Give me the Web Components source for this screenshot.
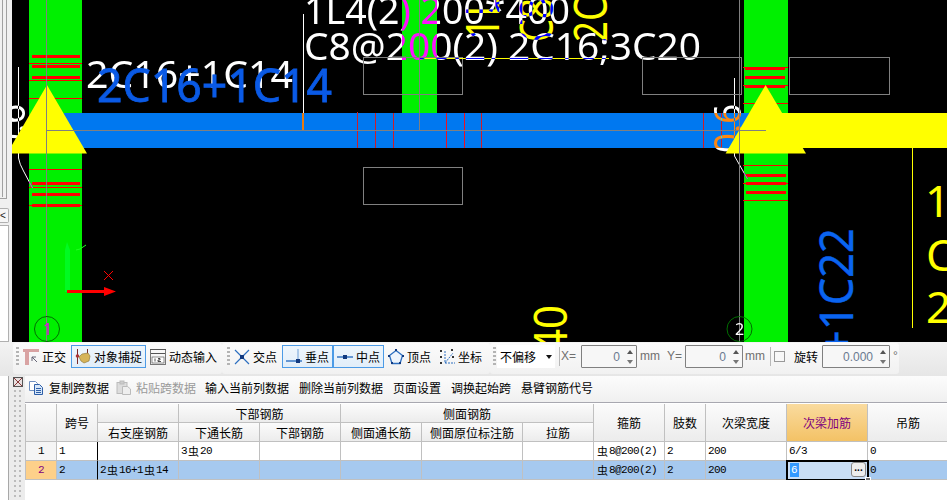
<!DOCTYPE html>
<html lang="zh">
<head>
<meta charset="utf-8">
<title>梁平法表格</title>
<style>
  html, body { margin: 0; height: 100%; background: #fff; overflow: hidden; }
  body { font: 12px "Noto Sans CJK SC", "Liberation Sans", sans-serif; color: #000; }
</style>
</head>
<body>
<cad-app></cad-app>

<script>
const CJK = `"Noto Sans CJK SC", "Liberation Sans", sans-serif`;

class LeftStrip extends HTMLElement {
  constructor() {
    super();
    this.attachShadow({ mode: "open" });
  }

  connectedCallback() {
    this.shadowRoot.innerHTML = /* html */`
    <style>
      :host { display: flex; flex-direction: column; width: 12px; height: 342px; background: #f0f0f0; }
      .tree { box-sizing: border-box; height: 199px; width: 7px; border-right: 1px solid #a0a0a0; border-bottom: 1px solid #a0a0a0; }
      .tree div { box-sizing: border-box; height: 197px; width: 3px; border-right: 1px solid #a0a0a0; }
      .tab {
        box-sizing: border-box; width: 9px; height: 15px; margin-top: 9px;
        border: 1px solid #b0b0b0; border-left: 0; border-radius: 0 2px 2px 0;
        background: #f6f6f6; font: 10px "Liberation Sans", sans-serif; line-height: 13px; color: #222;
      }
      .panel { box-sizing: border-box; width: 9px; flex: 1; margin-top: 2px; background: #fff; border: 1px solid #b0b0b0; border-left: 0; }
    </style>
    <div class="tree"><div></div></div>
    <div class="tab">&lt;</div>
    <div class="panel"></div>`;
  }
}

class CadCanvas extends HTMLElement {
  constructor() {
    super();
    this.attachShadow({ mode: "open" });
  }

  rungs(x1, x2, ys, w) {
    return ys.map(y => `<rect x="${x1}" y="${y}" width="${x2 - x1}" height="${w}"/>`).join("");
  }

  connectedCallback() {
    this.shadowRoot.innerHTML = /* html */`
    <style>
      :host { display: block; flex: 1; height: 342px; overflow: hidden; }
      svg { display: block; }
      text { font-family: "Noto Sans", "Liberation Sans", sans-serif; }
      .xor { mix-blend-mode: difference; }
    </style>
    <svg width="935" height="342" viewBox="12 0 935 342" shape-rendering="crispEdges">
      <rect x="12" y="0" width="935" height="342" fill="#000"/>

      <g fill="#00f000">
        <rect x="29" y="0" width="53" height="342"/>
        <rect x="402" y="0" width="35" height="113"/>
        <rect x="744" y="0" width="44" height="342"/>
      </g>
      <rect x="64" y="113" width="690" height="35" fill="#0078f0"/>
      <rect x="780" y="113" width="167" height="35" fill="#ffff00"/>

      <g fill="#ff0000">
        ${this.rungs(32, 80, [55, 65, 76, 182, 193, 204], 3)}
        ${this.rungs(29, 82, [63, 80, 98, 169, 187, 205], 1)}
        ${this.rungs(745, 785, [67, 76, 85], 3)}
        ${this.rungs(746, 786, [174, 182, 191], 3)}
        ${this.rungs(743, 788, [67, 85, 103, 165, 183, 200], 1)}
      </g>

      <g fill="#d01c28">
        <rect x="357" y="112" width="1" height="36"/>
        <rect x="375" y="113" width="1" height="35"/>
        <rect x="393" y="113" width="1" height="35"/>
        <rect x="481" y="113" width="1" height="35"/>
        <rect x="703" y="113" width="1" height="35"/>
        <rect x="721" y="113" width="1" height="35"/>
      </g>
      <g fill="#f01020">
        <rect x="446" y="113" width="1" height="35"/>
        <rect x="464" y="113" width="1" height="35"/>
      </g>

      <g fill="none" stroke="#808080">
        <rect x="363.5" y="57.5" width="99" height="37"/>
        <rect x="363.5" y="167.5" width="99" height="37"/>
        <rect x="642.5" y="57.5" width="99" height="37"/>
        <rect x="789.5" y="57.5" width="100" height="37"/>
      </g>

      <g fill="#ffff00" font-size="45">
        <text transform="translate(499,40) rotate(-90)" textLength="44" lengthAdjust="spacingAndGlyphs">1L</text>
        <text transform="translate(553,42) rotate(-90)" textLength="44" lengthAdjust="spacingAndGlyphs">C8</text>
        <text transform="translate(607,42) rotate(-90)" textLength="44" lengthAdjust="spacingAndGlyphs">2C</text>
        <text transform="translate(567,353) rotate(-90)" font-size="46" textLength="48" lengthAdjust="spacingAndGlyphs">40</text>
        <text x="925" y="217" font-size="44">1</text>
        <text x="926" y="271" font-size="44">C</text>
        <text x="926" y="323" font-size="44">2</text>
      </g>
      <rect x="912" y="148" width="1" height="180" fill="#ffff00"/>
      <rect x="419" y="58" width="190" height="1" fill="#ffff00"/>

      <text transform="translate(853,355) rotate(-90)" font-size="46" fill="#0a64f0" stroke="#0a64f0" stroke-width=".5" textLength="127" lengthAdjust="spacingAndGlyphs">+1C22</text>

      <g fill="#fff" class="xor" font-size="39">
        <text x="304" y="24" textLength="266" lengthAdjust="spacingAndGlyphs">1L4(2) 200*400</text>
        <text x="304" y="60" textLength="397" lengthAdjust="spacingAndGlyphs">C8@200(2) 2C16;3C20</text>
        <text x="86" y="88" textLength="207" lengthAdjust="spacingAndGlyphs">2C16+1C14</text>
        <text transform="translate(741,153) rotate(-90)" font-size="38" textLength="49" lengthAdjust="spacingAndGlyphs">0.6</text>
        <text transform="translate(25,153) rotate(-90)" font-size="38" textLength="49" lengthAdjust="spacingAndGlyphs">0.6</text>
      </g>
      <text x="97" y="102" font-size="46" fill="#0a5ae6" stroke="#0a5ae6" stroke-width=".8" textLength="235" lengthAdjust="spacingAndGlyphs">2C16+1C14</text>

      <rect x="303" y="14" width="1" height="99" fill="#fff"/>
      <rect x="302" y="113" width="2" height="17" fill="#e87a10"/>

      <g shape-rendering="auto" fill="none" stroke="#fff" class="xor">
        <path d="M18.5 67V158q1 6 5 13l9 17"/>
        <path d="M734.5 78V156l13 23"/>
      </g>

      <g fill="#ffff00" shape-rendering="auto">
        <polygon points="47,85 87,153.5 7,153.5"/>
        <polygon points="765.6,85 806,153.5 725.6,153.5"/>
      </g>

      <g fill="#808080">
        <rect x="46" y="0" width="1" height="342"/>
        <rect x="419" y="0" width="1" height="130"/>
        <rect x="739" y="0" width="1" height="342"/>
        <rect x="47" y="130" width="719" height="1"/>
      </g>

      <path d="M104 271l9 9M113 271l-9 9" stroke="#ff0000" fill="none"/>
      <g shape-rendering="auto">
        <path d="M65 292V250l2-8 3 8v42z" fill="#00ff30" opacity=".7"/>
        <path d="M76 250l4-1 6-4" fill="none" stroke="#20ff20"/>
        <path d="M67 290h37v-3l12 4.500-12 4.500v-3h-37z" fill="#ff0000"/>
        <circle cx="47" cy="329" r="12.500" fill="none" stroke="#006e00"/>
        <circle cx="739.500" cy="329" r="12.500" fill="none" stroke="#006e00"/>
        <text x="43" y="335" font-size="16" fill="#f000f0">1</text>
        <text x="735" y="335" font-size="16" fill="#fff">2</text>
      </g>
    </svg>`;
  }
}

class ToolBtn extends HTMLElement {
  constructor() {
    super();
    this.attachShadow({ mode: "open" });
  }

  connectedCallback() {
    this.shadowRoot.innerHTML = /* html */`
    <style>
      :host {
        display: flex; align-items: center; gap: 3px; box-sizing: border-box;
        height: 23px; padding: 0 3px; border: 1px solid transparent; white-space: nowrap;
        font: 12px ${CJK}; margin-top: 2px;
      }
      :host([active]) { border-color: #4c9be6; background: linear-gradient(#eef6fd, #e2eef9); }
      ::slotted(svg) { width: 16px; height: 16px; flex: none; display: block; }
    </style>
    <slot name="icon"></slot><slot></slot>`;
  }
}

class SpinBox extends HTMLElement {
  constructor() {
    super();
    this.attachShadow({ mode: "open" });
  }

  connectedCallback() {
    this.shadowRoot.innerHTML = /* html */`
    <style>
      :host {
        display: flex; align-items: center; justify-content: flex-end; box-sizing: border-box;
        height: 23px; margin-top: 2px; border: 1px solid #808080; border-radius: 1px;
        background: #f7f7f7; color: #6a7a90; font: 12px "Liberation Sans", sans-serif;
        padding-right: 3px;
      }
      .arrows { display: flex; flex-direction: column; gap: 6px; margin-left: 7px; }
      .up, .down { width: 0; height: 0; border: 3px solid transparent; }
      .up { border-top: 0; border-bottom: 4px solid #555; }
      .down { border-bottom: 0; border-top: 4px solid #777; }
    </style>
    <slot></slot>
    <div class="arrows"><div class="up"></div><div class="down"></div></div>`;
  }
}

class SnapBar extends HTMLElement {
  constructor() {
    super();
    this.attachShadow({ mode: "open" });
  }

  connectedCallback() {
    this.shadowRoot.innerHTML = /* html */`
    <style>
      :host {
        display: flex; box-sizing: border-box; height: 34px; padding: 1px 0 1px 13px;
        background: linear-gradient(#f3f3f3, #e6e6e6);
        font: 12px ${CJK};
      }
      .seg { display: flex; align-items: flex-start; height: 31px; background: linear-gradient(#fbfbfb, #f1f1f1); border-radius: 3px; }
      .s1 { width: 209px; padding-left: 3px; box-sizing: border-box; }
      .s2 { width: 268px; padding-left: 5px; box-sizing: border-box; }
      .s3 { width: 409px; padding-left: 3px; box-sizing: border-box; }
      .grip {
        width: 3px; height: 19px; margin-top: 4px; flex: none;
        background: repeating-linear-gradient(#b4b4b4 0 2px, transparent 2px 4px);
      }
      .combo {
        display: flex; align-items: center; box-sizing: border-box; width: 58px; height: 23px;
        margin: 2px 0 0 1px; padding-left: 3px; background: #fff;
      }
      .combo i { width: 0; height: 0; border: 3px solid transparent; border-bottom: 0; border-top: 4px solid #111; margin-left: 10px; }
      .sep { width: 1px; height: 19px; margin-top: 4px; background: #b8b8b8; flex: none; }
      .lbl { color: #707070; font-family: "Liberation Sans", sans-serif; line-height: 23px; margin-top: 2px; flex: none; }
      .chk { box-sizing: border-box; width: 11px; height: 11px; margin: 8px 0 0 3px; border: 1px solid #999; background: #f8f8f8; flex: none; }
      .txt { line-height: 23px; margin: 2px 0 0 9px; }
      .ml1 { margin-left: 1px; }
    </style>
    <div class="seg s1">
      <div class="grip"></div>
      <tool-btn>
        <svg slot="icon" viewBox="0 0 16 16"><path d="M0 1h17v3H6v13H2V4H0z" fill="#d9a3a3" transform="translate(0,-1)"/><path d="M9 8l5 5M9 8v4M9 8h4" stroke="#667" fill="none"/></svg>
        正交
      </tool-btn>
      <tool-btn active class="ml1">
        <svg slot="icon" viewBox="0 0 16 16"><path d="M2.500 0v15M12.500 0v8" stroke="#7a2a2a"/><circle cx="2.500" cy="7" r="1.800" fill="#a33"/><path d="M4 8l3-3 6-1 2 3-1 5-5 2-3-2z" fill="#d6b45a" stroke="#8a7030" stroke-width=".6"/></svg>
        对象捕捉
      </tool-btn>
      <tool-btn>
        <svg slot="icon" viewBox="0 0 16 16"><path d="M0 .500h16M0 4.500h16" stroke="#555"/><path d="M.500 1v15M15.500 1v15M0 15.500h16" stroke="#777" fill="none"/><rect x="2" y="8" width="12" height="6" fill="#fff" stroke="#444" stroke-width=".6"/><path d="M5 9.500v3M8 9.500h2v1.500H8v1.500h3" stroke="#222" fill="none" stroke-width=".8"/></svg>
        动态输入
      </tool-btn>
    </div>
    <div class="seg s2">
      <div class="grip"></div>
      <tool-btn>
        <svg slot="icon" viewBox="0 0 16 16"><path d="M1 1l14 14M15 1L1 15" stroke="#2d6fc0" stroke-width="1.200"/><rect x="6" y="6" width="4" height="4" fill="#123a80"/></svg>
        交点
      </tool-btn>
      <tool-btn active style="margin-left:1px">
        <svg slot="icon" viewBox="0 0 16 16"><path d="M0 12h16" stroke="#2d6fc0" stroke-width="1.400"/><path d="M12 0v12" stroke="#6fa0d8"/><rect x="10" y="10" width="4" height="4" fill="#123a80"/></svg>
        垂点
      </tool-btn>
      <tool-btn active>
        <svg slot="icon" viewBox="0 0 16 16"><path d="M0 8h16" stroke="#2d6fc0" stroke-width="1.400"/><rect x="6" y="6" width="4" height="4" fill="#123a80"/></svg>
        中点
      </tool-btn>
      <tool-btn>
        <svg slot="icon" viewBox="0 0 16 16"><path d="M8 1.500l6.500 5-2.500 8H4l-2.500-8z" fill="#eef4fb" stroke="#2d6fc0" stroke-width="1.300"/><g fill="#123a80"><rect x="7" y="0" width="2" height="2"/><rect x="0" y="6" width="2" height="2"/><rect x="14" y="6" width="2" height="2"/><rect x="3" y="13" width="2" height="2"/><rect x="11" y="13" width="2" height="2"/></g></svg>
        顶点
      </tool-btn>
      <tool-btn>
        <svg slot="icon" viewBox="0 0 16 16"><path d="M6 2v12h10M6 14l8-10" stroke="#2d6fc0" fill="none" stroke-dasharray="2 1"/><g fill="#333"><rect x="1" y="1" width="2" height="2"/><rect x="12" y="0" width="2" height="2"/><rect x="1" y="7" width="2" height="2"/><rect x="1" y="13" width="2" height="2"/><rect x="13" y="7" width="2" height="2"/></g></svg>
        坐标
      </tool-btn>
    </div>
    <div class="seg s3">
      <div class="grip"></div>
      <div class="combo">不偏移<i></i></div>
      <div class="sep" style="margin-left:4px"></div>
      <div class="lbl" style="width:17px;margin-left:1px">X=</div>
      <spin-box style="width:56px;margin-left:3px">0</spin-box>
      <div class="lbl" style="width:22px;margin-left:3px">mm</div>
      <div class="lbl" style="width:15px;margin-left:5px">Y=</div>
      <spin-box style="width:58px;margin-left:3px">0</spin-box>
      <div class="lbl" style="width:22px;margin-left:2px">mm</div>
      <div class="sep" style="margin-left:3px"></div>
      <div class="chk"></div>
      <div class="txt">旋转</div>
      <spin-box style="width:68px;margin-left:4px">0.000</spin-box>
      <div class="lbl" style="margin-left:3px">°</div>
    </div>`;
  }
}

class ActionBar extends HTMLElement {
  constructor() {
    super();
    this.attachShadow({ mode: "open" });
  }

  connectedCallback() {
    this.shadowRoot.innerHTML = /* html */`
    <style>
      :host {
        display: flex; align-items: center; box-sizing: border-box; height: 27px;
        padding: 0 0 3px 4px; border-bottom: 1px solid #a8a8b0;
        background: linear-gradient(#fcfcfc, #f0f0f0);
        font: 12px ${CJK}; white-space: nowrap;
      }
      .it { display: flex; align-items: center; gap: 5px; margin-right: 10px; }
      .it svg { width: 15px; height: 15px; flex: none; display: block; }
      .off { color: #9a9a9a; }
    </style>
    <div class="it" style="margin-right:7px">
      <svg viewBox="0 0 15 15"><path d="M.500 1.500h6l2 2v7h-8z" fill="#fff" stroke="#6f8fc0"/><path d="M5.500 4.500h5l3 3v7h-8z" fill="#d6e6f8" stroke="#2f5fa8"/><path d="M7 8.500h5M7 10.500h5M7 12.500h5" stroke="#2f5fa8"/></svg>
      复制跨数据
    </div>
    <div class="it off" style="margin-right:9px">
      <svg viewBox="0 0 15 15"><rect x="1" y="2.500" width="10" height="11" fill="#ddd" stroke="#bbb"/><rect x="4" y="1" width="4" height="3" fill="#ccc" stroke="#bbb"/><path d="M6.500 6.500h5l3 2.500v5.500h-8z" fill="#eee" stroke="#bbb"/></svg>
      粘贴跨数据
    </div>
    <div class="it">输入当前列数据</div>
    <div class="it">删除当前列数据</div>
    <div class="it">页面设置</div>
    <div class="it">调换起始跨</div>
    <div class="it">悬臂钢筋代号</div>`;
  }
}

class CellEditor extends HTMLElement {
  constructor() {
    super();
    this.attachShadow({ mode: "open" });
  }

  connectedCallback() {
    this.shadowRoot.innerHTML = /* html */`
    <style>
      :host {
        position: absolute; z-index: 2; left: -1px; top: -1px; width: 83px; height: 21px; box-sizing: border-box;
        border: 2px solid #000; background: #c9def6; display: block;
        font: 11px "Liberation Mono", monospace; line-height: 16px; letter-spacing: 0;
      }
      .sel { position: absolute; left: 2px; top: 1px; background: #3399ff; color: #fff; padding: 0 1px; line-height: 14px; }
      .more {
        position: absolute; right: 1px; top: 0; width: 15px; height: 15px; box-sizing: border-box;
        border: 1px solid #888; border-radius: 3px; background: #ededed; color: #000;
        text-align: center; font: bold 10px/9px "Liberation Sans", sans-serif;
      }
      .handle { position: absolute; right: -4px; bottom: -4px; width: 4px; height: 4px; background: #707070; border: 1px solid #fff; }
    </style>
    <span class="sel">6</span>
    <div class="more">...</div>
    <div class="handle"></div>`;
  }
}

class RebarGrid extends HTMLElement {
  constructor() {
    super();
    this.attachShadow({ mode: "open" });
  }

  static get styles() {
    return /* css */`
      :host { display: block; overflow: hidden; margin-top: 1px; border-left: 1px solid #c0c0c0; }
      .grid {
        display: grid; width: 923px;
        grid-template-columns: 31px 41px repeat(4, 81px) 101px 71px 71px 41px 81px 81px 81px;
        grid-auto-rows: 19px;
      }
      .c {
        box-sizing: border-box; border-right: 1px solid #c0c0c0; border-bottom: 1px solid #c0c0c0;
        display: flex; align-items: center; min-width: 0; position: relative; white-space: nowrap;
      }
      .h {
        justify-content: center; background: linear-gradient(#fbfbfb, #ececec);
        font: 12px ${CJK};
      }
      .hot { background: linear-gradient(#fadb9e, #f3c266); color: #800080; }
      .d { background: #fff; padding-left: 2px; font: 11px "Liberation Mono", monospace; letter-spacing: -.6px; }
      .d .s { font: 11px ${CJK}; letter-spacing: 0; margin: 0 1px; }
      .row2 { background: #a6c9ef; }
      .n { justify-content: center; padding: 0; background: #f5f5f5; }
      .n.row2 { background: #fdd08a; color: #800080; }
      .frozen { border-right-color: #000; }
    `;
  }

  dataCell(value, cls = "") {
    const text = value.replace(/虫/g, `<span class="s">虫</span>`);
    return `<div class="c d ${cls}">${text}</div>`;
  }

  render() {
    const rows = [
      ["1", "1", "", "3虫20", "", "", "", "", "虫8@200(2)", "2", "200", "6/3", "0"],
      ["2", "2", "2虫16+1虫14", "", "", "", "", "", "虫8@200(2)", "2", "200", "", "0"],
    ];

    const body = rows.map((row, r) => row.map((value, i) => {
      const cls = [r === 1 ? "row2" : "", i === 0 ? "n" : "", i === 1 ? "frozen" : ""].join(" ");
      if (r === 1 && i === 11) return `<div class="c d row2"><cell-editor></cell-editor></div>`;
      return this.dataCell(value, cls);
    }).join("")).join("");

    this.shadowRoot.innerHTML = /* html */`
    <style>${RebarGrid.styles}</style>
    <div class="grid">
      <div class="c h" style="grid-row: span 2"></div>
      <div class="c h" style="grid-row: span 2">跨号</div>
      <div class="c h"></div>
      <div class="c h" style="grid-column: span 2">下部钢筋</div>
      <div class="c h" style="grid-column: span 3">侧面钢筋</div>
      <div class="c h" style="grid-row: span 2">箍筋</div>
      <div class="c h" style="grid-row: span 2">肢数</div>
      <div class="c h" style="grid-row: span 2">次梁宽度</div>
      <div class="c h hot" style="grid-row: span 2">次梁加筋</div>
      <div class="c h" style="grid-row: span 2">吊筋</div>
      <div class="c h">右支座钢筋</div>
      <div class="c h">下通长筋</div>
      <div class="c h">下部钢筋</div>
      <div class="c h">侧面通长筋</div>
      <div class="c h">侧面原位标注筋</div>
      <div class="c h">拉筋</div>
      ${body}
    </div>`;
  }

  connectedCallback() {
    this.render();
  }
}

class CadApp extends HTMLElement {
  constructor() {
    super();
    this.attachShadow({ mode: "open" });
  }

  connectedCallback() {
    this.shadowRoot.innerHTML = /* html */`
    <style>
      :host { display: flex; flex-direction: column; width: 947px; height: 500px; overflow: hidden; background: #f0f0f0; }
      .top { display: flex; height: 342px; }
      .lower { display: flex; flex: 1; min-height: 0; }
      .white { width: 8px; background: #fff; border-right: 1px solid #a8a8a8; flex: none; }
      .dock { position: relative; width: 16px; flex: none; background: #ececec; }
      .dock svg { position: absolute; left: 4px; top: 1px; }
      .dots {
        position: absolute; left: 5px; top: 14px; bottom: 0; width: 7px;
        background: radial-gradient(circle at 1px 1px, #bcbcbc 1px, transparent 1.300px) 0 0 / 5px 5px;
      }
      .main { flex: 1; min-width: 0; display: flex; flex-direction: column; background: #fff; }
    </style>
    <div class="top">
      <left-strip></left-strip>
      <cad-canvas></cad-canvas>
    </div>
    <snap-bar></snap-bar>
    <div class="lower">
      <div class="white"></div>
      <div class="dock">
        <svg width="10" height="10" viewBox="0 0 10 10"><rect x=".5" y=".5" width="9" height="9" fill="#e8e0e0" stroke="#555"/><path d="M1 1l8 8M9 1l-8 8" stroke="#8a3a3a"/></svg>
        <div class="dots"></div>
      </div>
      <div class="main">
        <action-bar></action-bar>
        <rebar-grid></rebar-grid>
      </div>
    </div>`;
  }
}

customElements.define("left-strip", LeftStrip);
customElements.define("cad-canvas", CadCanvas);
customElements.define("tool-btn", ToolBtn);
customElements.define("spin-box", SpinBox);
customElements.define("snap-bar", SnapBar);
customElements.define("action-bar", ActionBar);
customElements.define("cell-editor", CellEditor);
customElements.define("rebar-grid", RebarGrid);
customElements.define("cad-app", CadApp);
</script>
</body>
</html>
